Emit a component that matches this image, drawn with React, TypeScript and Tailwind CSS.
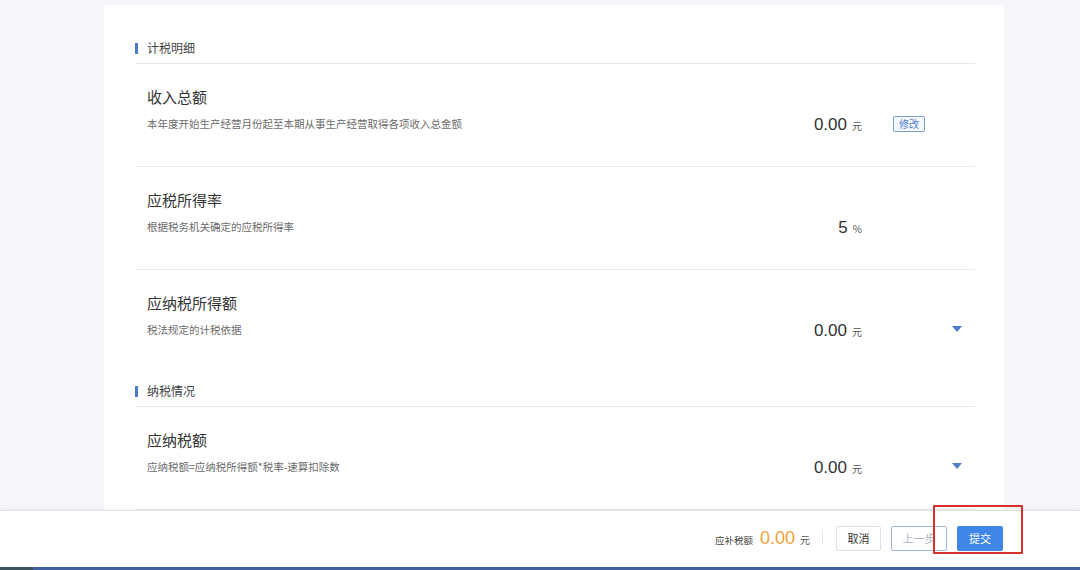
import React from "react";

const cjk = { fontFamily: '"Noto Sans CJK SC", "Noto Sans", sans-serif' };
const num = { fontFamily: '"Liberation Sans", Arial, "Noto Sans CJK SC", sans-serif' };

function SectionHeader({ title, extra = false }: { title: string; extra?: boolean }) {
  return (
    <div
      className={`${extra ? "h-[34px] pt-[3px]" : "h-[33px] pt-[1px]"} flex items-center border-b border-[#e6e8ec]`}
    >
      <div className="w-[3px] h-[11px] bg-[#4a7bc4] mr-[9px] mt-[1px]" />
      <span className="text-[12px] text-[#444] leading-none" style={cjk}>
        {title}
      </span>
    </div>
  );
}

function Row({
  title,
  desc,
  value,
  unit,
  action,
  divider = true,
}: {
  title: string;
  desc: string;
  value: string;
  unit: string;
  action?: "edit" | "drop";
  divider?: boolean;
}) {
  return (
    <div className={`h-[103px] pl-[12px] pt-[23px] ${divider ? "border-b border-[#e8eaee]" : ""}`}>
      <div className="text-[15px] leading-[20px] text-[#333]" style={cjk}>
        {title}
      </div>
      <div className="flex items-center mt-[5px] h-[24px]">
        <div className="flex-1 text-[10.5px] text-[#6b6b6b] leading-none" style={cjk}>
          {desc}
        </div>
        <div className="flex items-baseline">
          <span className="text-[17px] text-[#333] leading-none" style={num}>
            {value}
          </span>
          <span className="text-[10px] text-[#555] ml-[5px] leading-none" style={cjk}>
            {unit}
          </span>
        </div>
        <div className="w-[113px] h-full flex items-center">
          {action === "edit" && (
            <div
              className="ml-[31px] w-[32px] h-[16px] border border-[#7aa2d8] bg-[#f4f8fe] rounded-[2px] flex items-center justify-center text-[10px] text-[#4f7fcc] leading-none"
              style={cjk}
            >
              修改
            </div>
          )}
          {action === "drop" && (
            <svg className="ml-[90px] -mt-[2px]" width="10" height="6" viewBox="0 0 10 6">
              <path d="M0 0 L10 0 L5 6 Z" fill="#4d7cc9" />
            </svg>
          )}
        </div>
      </div>
    </div>
  );
}

export default function App() {
  return (
    <div className="w-[1080px] h-[570px] relative overflow-hidden bg-[#f5f6fa] flex flex-col">
      <div className="h-[510px] overflow-hidden pt-[5px] pl-[104px]">
        <div className="w-[900px] h-[600px] bg-white pt-[26px] pl-[31px] pr-[29px]">
          <SectionHeader title="计税明细" />
          <Row
            title="收入总额"
            desc="本年度开始生产经营月份起至本期从事生产经营取得各项收入总金额"
            value="0.00"
            unit="元"
            action="edit"
          />
          <Row title="应税所得率" desc="根据税务机关确定的应税所得率" value="5" unit="%" />
          <Row
            title="应纳税所得额"
            desc="税法规定的计税依据"
            value="0.00"
            unit="元"
            action="drop"
            divider={false}
          />
          <SectionHeader title="纳税情况" extra />
          <Row
            title="应纳税额"
            desc="应纳税额=应纳税所得额*税率-速算扣除数"
            value="0.00"
            unit="元"
            action="drop"
          />
        </div>
      </div>
      <div className="h-[57px] bg-white border-t border-[#dfe2e7] shadow-[0_-2px_4px_rgba(0,0,0,0.04)] flex items-center justify-end pr-[77px] pb-[2px]">
        <div className="flex items-baseline mr-[12px]">
          <span className="text-[9.5px] text-[#444]" style={cjk}>
            应补税额
          </span>
          <span className="text-[18px] text-[#eea23a] ml-[7px] leading-none" style={num}>
            0.00
          </span>
          <span className="text-[10px] text-[#555] ml-[5px]" style={cjk}>
            元
          </span>
        </div>
        <div className="w-px h-[14px] bg-[#e2e4e8] mr-[13px]" />
        <button
          className="w-[45px] h-[25px] border border-[#dcdfe4] rounded-[2px] bg-white text-[11px] text-[#333] mr-[10px]"
          style={cjk}
        >
          取消
        </button>
        <button
          className="w-[56px] h-[25px] border border-[#9fb6d4] rounded-[2px] bg-white text-[11px] text-[#a8b4c4] mr-[10px]"
          style={cjk}
        >
          上一步
        </button>
        <button
          className="w-[46px] h-[25px] rounded-[2px] bg-[#3f86e6] text-[11px] text-white"
          style={cjk}
        >
          提交
        </button>
      </div>
      <div className="h-[3px] flex">
        <div className="w-[33px] bg-[#3c5460]" />
        <div className="flex-1 bg-[#3f5f9e]" />
      </div>
      <div className="absolute left-[933px] top-[505px] w-[90px] h-[49px] border-2 border-[#d8312c] rounded-[1px]" />
    </div>
  );
}
